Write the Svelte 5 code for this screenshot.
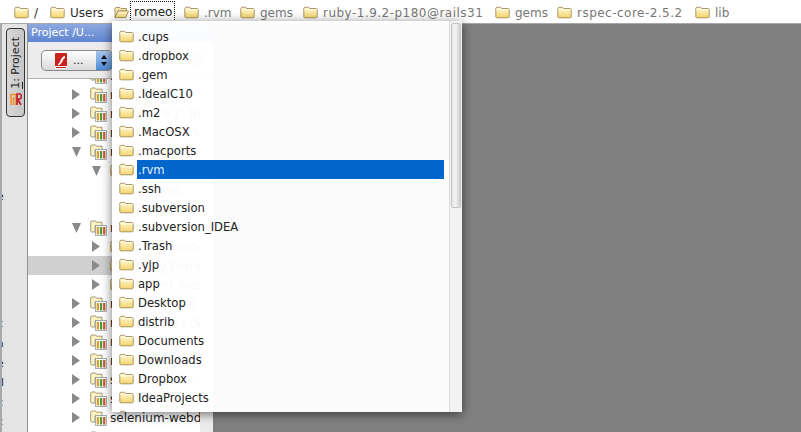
<script>
  const crumbs = [
    { t: '/', w: 36 }, { t: 'Users', w: 64 }, { t: 'romeo', w: 70, open: true }, { t: '.rvm', w: 56, dim: true },
    { t: 'gems', w: 63, dim: true }, { t: 'ruby-1.9.2-p180@rails31', w: 192, dim: true, wide: true },
    { t: 'gems', w: 62, dim: true }, { t: 'rspec-core-2.5.2', w: 138, dim: true, wide: true }, { t: 'lib', w: 40, dim: true }
  ];
  const items = ['.cups','.dropbox','.gem','.IdealC10','.m2','.MacOSX','.macports','.rvm','.ssh','.subversion','.subversion_IDEA','.Trash','.yjp','app','Desktop','distrib','Documents','Downloads','Dropbox','IdeaProjects'];
  const tree = [
    { top: 76, lvl: 0, a: '', t: 'rails' },
    { top: 95, lvl: 0, a: 'r', t: 'rails 3.0.9' },
    { top: 114, lvl: 0, a: 'r', t: 'rails 3.0.9.2, RVM' },
    { top: 133, lvl: 0, a: 'r', t: 'rdoc 3.9.2, RVM' },
    { top: 152, lvl: 0, a: 'd', t: 'rspec-core 2.5.2' },
    { top: 171, lvl: 1, a: 'd', t: 'library home', f: true },
    { top: 190, lvl: 2, a: '', t: 'rspec', f: true },
    { top: 209, lvl: 2, a: '', t: 'rspec', f: true },
    { top: 228, lvl: 0, a: 'd', t: 'rspec-expect' },
    { top: 247, lvl: 1, a: 'r', t: 'library home', f: true },
    { top: 266, lvl: 1, a: 'r', t: 'library home', f: true, sel: true },
    { top: 285, lvl: 1, a: 'r', t: 'support files', f: true },
    { top: 304, lvl: 0, a: 'r', t: 'rspec-rails 2.6' },
    { top: 323, lvl: 0, a: 'r', t: 'rspec-mocks (V' },
    { top: 342, lvl: 0, a: 'r', t: 'rspec 2.6.0' },
    { top: 361, lvl: 0, a: 'r', t: 'ruby-prof' },
    { top: 380, lvl: 0, a: 'r', t: 'sass 3.1.7, RV' },
    { top: 399, lvl: 0, a: 'r', t: 'sass-rails' },
    { top: 418, lvl: 0, a: 'r', t: 'selenium-webd' },
    { top: 439, lvl: 0, a: '', t: '' }
  ];
  const marks = [['e', 190], ['r', 258], ['c', 317], ['a', 337], ['e', 357], ['d', 376], ['c', 396], ['c', 415]];
</script>

{#snippet folder(open)}
  <svg class="fi" viewBox="0 0 15 13" width="15" height="13">
    <defs>
      <linearGradient id="fg" x1="0" y1="0" x2="0" y2="1">
        <stop offset="0" stop-color="#fff8d4"/><stop offset="1" stop-color="#f4d56c"/>
      </linearGradient>
    </defs>
    {#if open}
      <path d="M1 11.5V2.5L1.8 1.5H6L7 2.5H12.5V5H4L1 11.5Z" fill="#f4e6ae" stroke="#97824a" stroke-width=".8"/>
      <path d="M1 11.5L4 5H14.5L11.8 11.5Z" fill="url(#fg)" stroke="#97824a" stroke-width=".8"/>
    {:else}
      <path d="M.8 11V2.3L1.6 1.3H5.6L6.6 2.5H13.4L14.2 3.3V11L13.4 11.8H1.6Z" fill="url(#fg)" stroke="#97824a" stroke-width=".8"/>
      <path d="M1.4 3.8H13.6" stroke="#fffbe6" stroke-width="1"/>
    {/if}
  </svg>
{/snippet}

{#snippet lib()}
  <svg class="libi" viewBox="0 0 17 16" width="17" height="16">
    <path d="M.7 11V2L1.5 1H5.5L6.5 2.2H12V6H5V12H1.5Z" fill="#fff3c4" stroke="#8d8255" stroke-width=".8"/>
    <rect x="5.5" y="5.5" width="11" height="10" fill="#fff" stroke="#7f8f9a" stroke-width=".7"/>
    <rect x="6.7" y="7" width="2.3" height="7.5" fill="#d9a130"/>
    <rect x="9.9" y="7" width="2.3" height="7.5" fill="#4f9a3c"/>
    <rect x="13.1" y="7" width="2.3" height="7.5" fill="#cf5a30"/>
  </svg>
{/snippet}

<div class="page">
  <nav class="crumbs">
    {#each crumbs as c}
      <div class="crumb" class:dim={c.dim} class:wide={c.wide} style="width:{c.w}px">
        {@render folder(c.open)}
        <span class:focus={c.open}>{c.t}</span>
      </div>
    {/each}
  </nav>

  <div class="main">
    <aside class="strip">
      {#each marks as m}
        <span class="mark" style="top:{m[1] - 24}px">{m[0]}</span>
      {/each}
      <div class="tab">
        <span class="tab-label"><u>1</u>: Project</span>
        <svg class="rm" viewBox="0 0 12 12" width="12" height="12">
          <path d="M1 12V1.5H6V12M3.5 12V4" fill="none" stroke="#ef8f22" stroke-width="1.5"/>
          <path d="M7 12V1H10C11.6 1 11.6 6 10 6H7.5L11 12" fill="none" stroke="#c4202c" stroke-width="1.7"/>
        </svg>
      </div>
    </aside>

    <section class="panel">
      <header class="title">Project /U...</header>
      <div class="tools">
        <div class="combo">
          <svg class="flash" viewBox="0 0 12 16" width="12" height="16">
            <rect width="12" height="16" rx="1" fill="#c9221f"/>
            <path d="M3 11C6 10 5 4 10 3V5C7.5 5.5 8 11 3 12.5Z" fill="#fff"/>
            <rect y="13" width="12" height="3" fill="#f3f3f3"/>
            <rect x="1" y="14" width="10" height="1" fill="#c9221f"/>
          </svg>
          <span class="dots">...</span>
          <span class="spin">
            <i class="up"></i><i class="down"></i>
          </span>
        </div>
        <span class="gear">⚙</span>
      </div>
      <div class="body">
        <div class="tree">
          {#each tree as r}
            <div class="row" class:sel={r.sel} style="top:{r.top - 89}px;padding-left:{44 + r.lvl * 20}px">
              <span class="arrow {r.a}"></span>
              {#if r.f}{@render folder(false)}{:else}{@render lib()}{/if}
              <span class="rt">{r.t}</span>
            </div>
          {/each}
        </div>
      </div>
    </section>

    <div class="editor"></div>
  </div>

  <div class="popup">
    <ul class="list">
      {#each items as it, i}
        <li class="item" class:cur={i === 7}>
          {@render folder(false)}
          <span class="lbl">{it}</span>
        </li>
      {/each}
      <li class="item">{@render folder(false)}</li>
    </ul>
    <div class="track"><div class="thumb"></div></div>
  </div>
</div>

<style>
  :global(body) { margin: 0; background: #808080; overflow: hidden; }
  .page { position: relative; width: 801px; height: 432px; overflow: hidden; font-family: "DejaVu Sans", sans-serif; font-size: 12px; color: #222; }
  .crumbs { display: flex; height: 24px; padding-left: 14px; background: #fff; box-sizing: border-box; border-bottom: 1px solid #a8a8a8; align-items: flex-start; }
  .crumb { display: flex; align-items: center; gap: 5px; height: 23px; padding-top: 2px; box-sizing: border-box; flex: none; white-space: nowrap; color: #2c2c2c; }
  .crumb.dim { color: #777; }
  .crumb.wide { letter-spacing: .48px; }
  .crumb .fi { flex: none; }
  .focus { outline: 1px dotted #111; margin-left: -3px; padding: 3px 2px 4px 3px; color: #222; }
  .main { display: flex; height: 408px; }
  .strip { position: relative; width: 28px; flex: none; background: #e4e4e4; border-left: 2px solid #a8a8a8; box-sizing: border-box; padding: 4px 0 0 4px; border-right: 1px solid #8f8f8f; overflow: hidden; }
  .mark { position: absolute; left: -5px; font-size: 11px; line-height: 13px; color: #333; }
  .tab { position: relative; width: 19px; height: 89px; box-sizing: border-box; border: 1px solid #333; border-radius: 4px; background: linear-gradient(90deg, #d8d8d8, #c6c6c6); display: flex; flex-direction: column; align-items: center; justify-content: flex-end; padding-bottom: 11px; gap: 4px; }
  .tab-label { writing-mode: vertical-rl; transform: rotate(180deg); font-size: 11px; line-height: 15px; color: #222; white-space: nowrap; }
  .panel { width: 185px; flex: none; background: #ececec; display: flex; flex-direction: column; }
  .title { height: 18px; background: linear-gradient(#8ea9e0, #5f85d0); color: #fff; font-size: 11px; line-height: 17px; padding-left: 3px; }
  .tools { position: relative; height: 37px; box-sizing: border-box; background: #ececec; border-bottom: 1px solid #b0b0b0; padding: 8px 0 0 13px; }
  .combo { width: 72px; height: 21px; box-sizing: border-box; border: 1px solid #888; border-radius: 5px; background: linear-gradient(#fff, #d9d9d9); display: flex; align-items: center; padding-left: 13px; position: relative; overflow: hidden; }
  .dots { margin-left: 6px; font-size: 11px; line-height: 14px; }
  .spin { position: absolute; right: 0; top: 0; bottom: 0; width: 16px; background: linear-gradient(#a9c8ee, #4f8ad8); display: flex; flex-direction: column; align-items: center; justify-content: center; gap: 3px; }
  .up { width: 0; height: 0; border: 3px solid transparent; border-top: 0; border-bottom: 4px solid #111; }
  .down { width: 0; height: 0; border: 3px solid transparent; border-bottom: 0; border-top: 4px solid #111; }
  .gear { position: absolute; left: 163px; top: 8px; font-size: 17px; line-height: 20px; color: #777; }
  .body { flex: 1; display: flex; overflow: hidden; }
  .tree { width: 172px; flex: none; background: #fff; position: relative; overflow: hidden; }
  .row { position: absolute; left: 0; right: 0; height: 19px; display: flex; align-items: center; white-space: nowrap; overflow: hidden; box-sizing: border-box; }
  .row.sel { background: #d0d0d0; }
  .arrow { width: 8px; height: 11px; flex: none; margin-right: 10px; }
  .arrow.r { background: #8a8a8a; clip-path: polygon(0 0, 100% 50%, 0 100%); }
  .arrow.d { width: 9px; margin-right: 9px; background: #8a8a8a; clip-path: polygon(0 10%, 100% 10%, 50% 100%); }
  .rt { margin-left: 3px; }
  .row .libi { flex: none; margin-top: 1px; }
  .row .fi { flex: none; }
  .editor { flex: 1; background: #808080; }
  .popup { position: absolute; left: 112px; top: 21px; width: 350px; height: 391px; display: flex; background: rgba(255,255,255,.97); box-shadow: 0 2px 10px rgba(0,0,0,.55); overflow: hidden; }
  .list { flex: 1; margin: 0; padding: 6px 5px 0 0; list-style: none; overflow: hidden; }
  .item { height: 19px; display: flex; align-items: center; white-space: nowrap; padding-left: 7px; color: #222; font-size: 11.6px; }
  .lbl { margin-left: 3px; padding: 1px 0 0 1px; height: 18px; flex: 1; line-height: 18px; }
  .cur .lbl { background: #0066cc; color: #e6eefa; }
  .track { width: 13px; flex: none; background: #f2f2f2; border-left: 1px solid #dadada; box-sizing: border-box; padding: 2px 1px 0 1px; }
  .thumb { height: 185px; box-sizing: border-box; border: 1px solid #c4c4c4; border-radius: 2px; background: linear-gradient(90deg, #e6e6e6, #f2f2f2 45%, #cfcfcf); }
</style>
